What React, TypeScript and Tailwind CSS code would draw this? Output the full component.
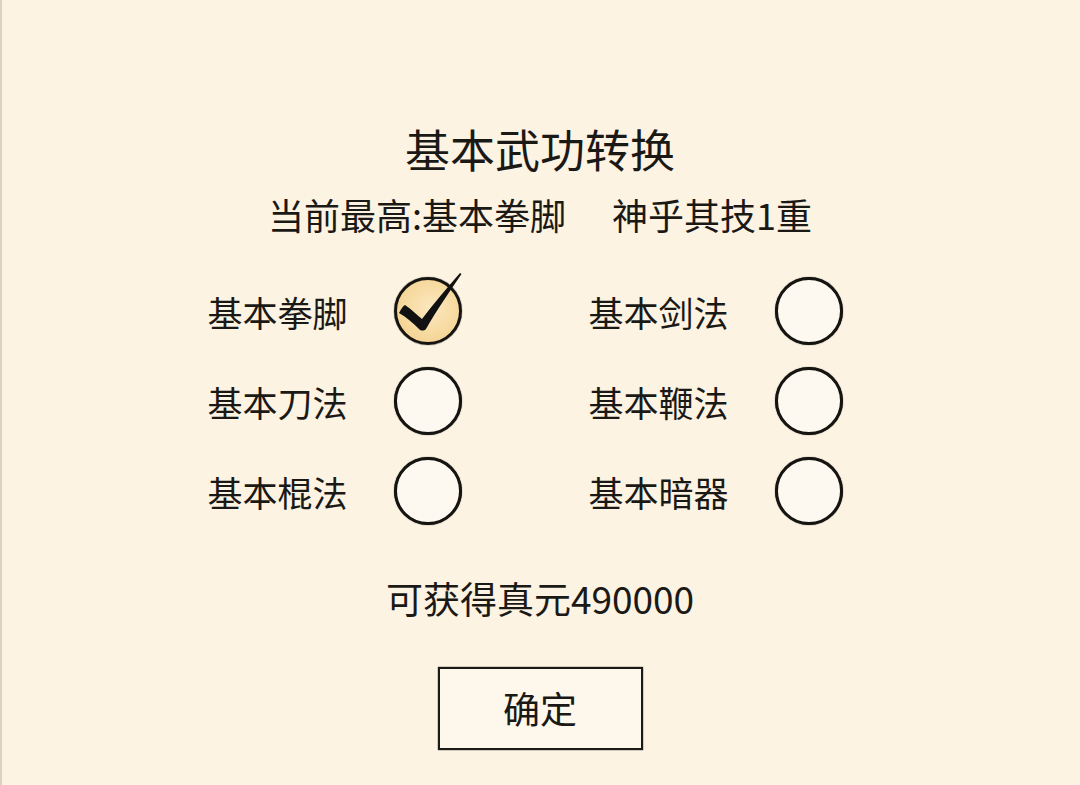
import React from "react";

const font = { fontFamily: '"Noto Sans CJK SC", "Noto Sans", sans-serif' };

type Skill = { name: string; checked?: boolean };

const rows: [Skill, Skill][] = [
  [{ name: "基本拳脚", checked: true }, { name: "基本剑法" }],
  [{ name: "基本刀法" }, { name: "基本鞭法" }],
  [{ name: "基本棍法" }, { name: "基本暗器" }],
];

function Tick() {
  return (
    <svg
      className="absolute left-0 top-0 overflow-visible"
      width="68"
      height="68"
      viewBox="0 0 68 68"
    >
      <path
        d="M5 36 C7 32 9 29 11 28 C17 32 23 38 28 42 C40 26 54 10 66 -4 L67.5 -3 C56 14 42 34 32 52 C30 54 27 54 25 52 C19 46 12 40 5 36 Z"
        fill="#111"
      />
    </svg>
  );
}

function Circle({ checked }: { checked?: boolean }) {
  return (
    <div className="relative h-[68px] w-[68px] shrink-0">
      <div
        className={
          checked
            ? "h-full w-full rounded-full border-[3px] border-[#161410] bg-[radial-gradient(circle_at_55%_45%,#fbe7bf_0%,#f6d89c_60%,#f1cd8a_100%)] shadow-[0_0_1px_#000]"
            : "h-full w-full rounded-full border-[3px] border-[#161410] bg-[#fdf9f0] shadow-[0_0_1px_#000]"
        }
      />
      {checked && <Tick />}
    </div>
  );
}

function Item({ skill }: { skill: Skill }) {
  return (
    <div className="flex items-center">
      <span className="w-[140px] text-[35px] leading-none text-[#1b1916]">{skill.name}</span>
      <span className="w-[46px]" />
      <Circle checked={skill.checked} />
    </div>
  );
}

export default function App() {
  return (
    <div
      className="relative flex h-[785px] w-[1080px] flex-col items-center overflow-hidden bg-[#fcf3e3] text-[#1b1916]"
      style={font}
    >
      <div className="absolute left-0 top-0 h-full w-[2px] bg-[#ddd2bd]" />

      <h1 className="mt-[126px] text-[45px] font-normal leading-none">基本武功转换</h1>

      <div className="mt-[25px] flex text-[36px] leading-none">
        <span>当前最高:基本拳脚</span>
        <span className="ml-[46px]">神乎其技1重</span>
      </div>

      <div className="mt-[45px] flex flex-col gap-[22px] pr-[30px]">
        {rows.map((r, i) => (
          <div key={i} className="flex gap-[127px]">
            <Item skill={r[0]} />
            <Item skill={r[1]} />
          </div>
        ))}
      </div>

      <div className="mt-[55px] text-[37px] leading-none">可获得真元490000</div>

      <button className="mt-[50px] flex h-[83px] w-[205px] items-center justify-center border-2 border-[#1c1a17] bg-[#fdf7ec] text-[37px] leading-none text-[#1b1916] shadow-[0_0_1px_#000]">
        确定
      </button>
    </div>
  );
}
